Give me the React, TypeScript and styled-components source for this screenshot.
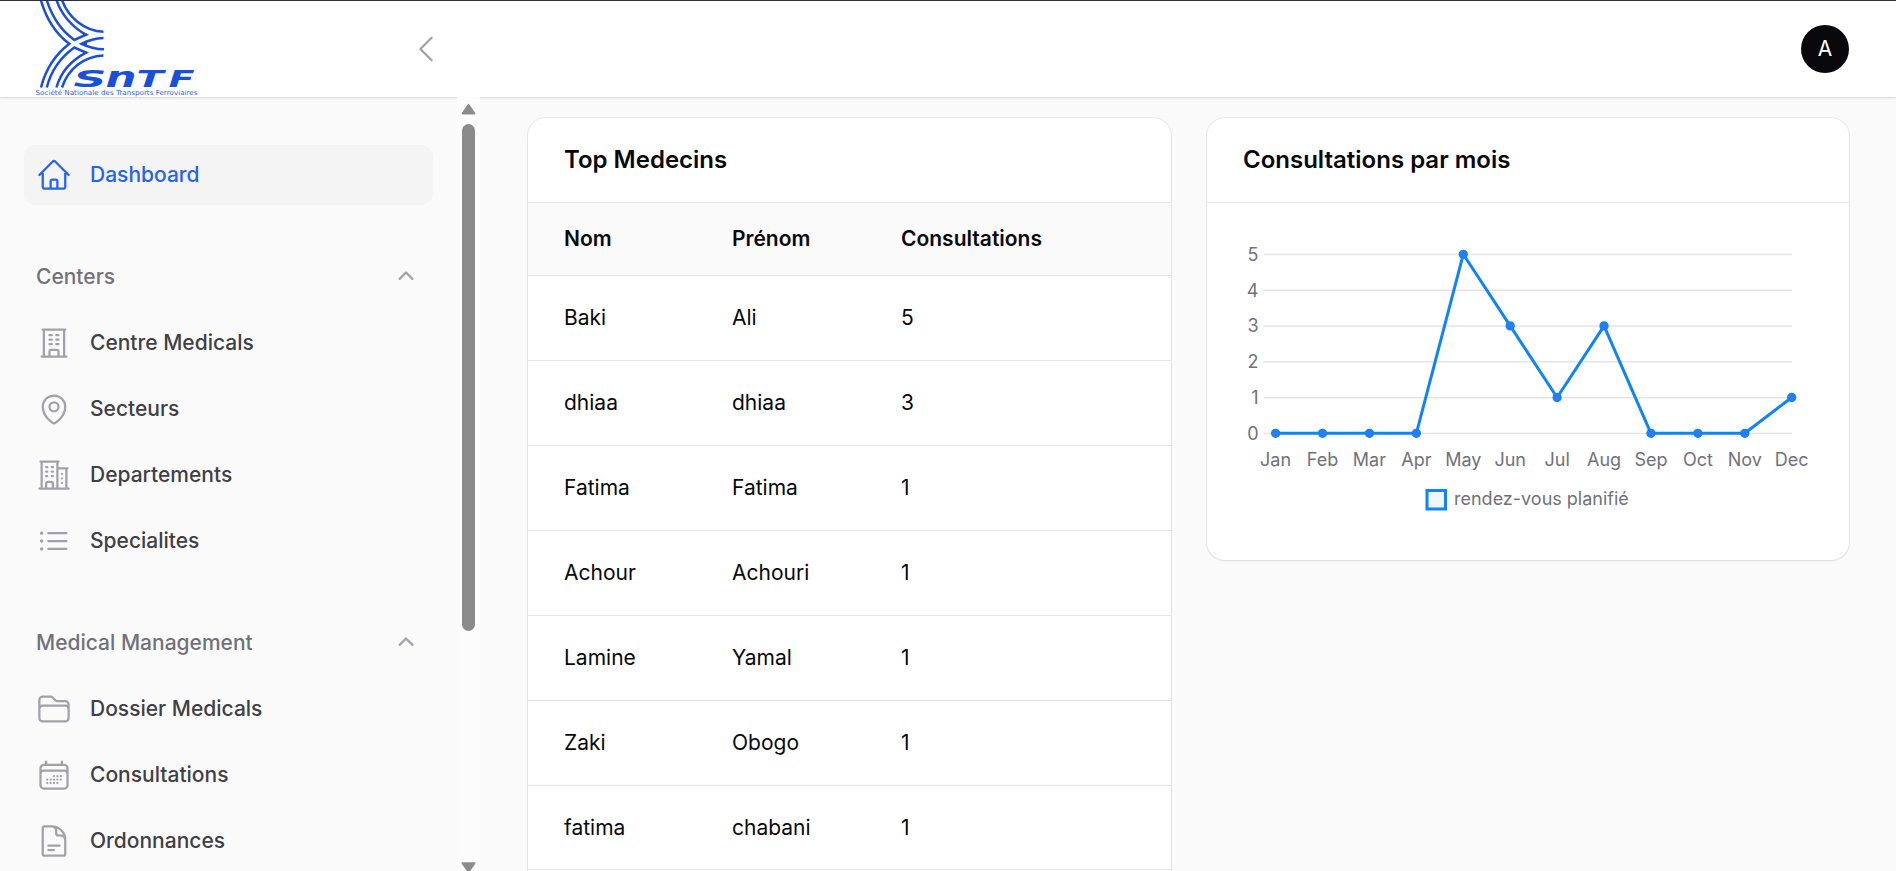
import React from 'react';
import styled, { createGlobalStyle } from 'styled-components';
import {
  HiOutlineHome, HiOutlineBuildingOffice, HiOutlineMapPin, HiOutlineBuildingOffice2,
  HiOutlineListBullet, HiOutlineFolder, HiOutlineCalendarDays, HiOutlineDocumentText,
  HiOutlineChevronLeft, HiMiniChevronUp,
} from 'react-icons/hi2';

const Global = createGlobalStyle`
  * { box-sizing: border-box; }
  body { margin: 0; background: #fafafa; font-family: Inter, "Noto Sans", sans-serif; color: #09090b; overflow: hidden; }
`;

const Page = styled.div`
  height: 871px;
  display: flex;
  flex-direction: column;
  overflow: hidden;
  border-top: 1px solid #2f2e41;
`;

const Topbar = styled.header`
  flex: none;
  height: 96px;
  display: flex;
  align-items: center;
  justify-content: space-between;
  background: #fff;
  box-shadow: 0 0 0 1px rgba(9, 9, 11, 0.06), 0 1px 3px rgba(0, 0, 0, 0.1);
  padding-right: 47px;
`;

const Brand = styled.div`
  width: 444px;
  height: 96px;
  padding-left: 34px;
  display: flex;
  justify-content: space-between;
  align-items: center;
`;

const CollapseIcon = styled(HiOutlineChevronLeft)`
  width: 36px;
  height: 36px;
  color: #a1a1aa;
`;

const Avatar = styled.div`
  width: 48px;
  height: 48px;
  border-radius: 50%;
  background: #09090b;
  color: #fff;
  display: flex;
  align-items: center;
  justify-content: center;
  font-size: 21px;
  padding-bottom: 1px;
`;

const Body = styled.div`
  flex: 1;
  min-height: 0;
  display: flex;
`;

const Sidebar = styled.aside`
  width: 457px;
  flex: none;
  overflow: hidden;
  padding: 48px 24px;
  display: flex;
  flex-direction: column;
  gap: 42px;
`;

const Group = styled.div`
  display: flex;
  flex-direction: column;
  gap: 6px;
`;

const Label = styled.span`
  padding-bottom: 2px;
`;

const GroupHeader = styled.div`
  height: 60px;
  flex: none;
  padding: 0 12px;
  display: flex;
  align-items: center;
  justify-content: space-between;
  font-size: 21px;
  font-weight: 500;
  color: #71717a;
  svg { width: 30px; height: 30px; color: #a1a1aa; }
`;

const Item = styled.a<{ $active?: boolean }>`
  height: 60px;
  flex: none;
  padding: 0 12px;
  display: flex;
  align-items: center;
  gap: 18px;
  border-radius: 12px;
  font-size: 21px;
  font-weight: 500;
  background: ${(p) => (p.$active ? '#f4f4f5' : 'transparent')};
  color: ${(p) => (p.$active ? '#2563eb' : '#3f3f46')};
  svg { width: 36px; height: 36px; color: ${(p) => (p.$active ? '#2563eb' : '#a1a1aa')}; }
`;

const Scrollbar = styled.div`
  width: 23px;
  flex: none;
  position: relative;
  z-index: 1;
  background: #fcfcfc;
  display: flex;
  flex-direction: column;
  align-items: center;
  padding-top: 6px;
`;

const Thumb = styled.div`
  width: 13px;
  height: 507px;
  margin: 9px 0 230px;
  flex: none;
  border-radius: 7px;
  background: #8b8b8b;
`;

const Arrow = styled.svg`
  display: block;
  flex: none;
  width: 15px;
  height: 12px;
`;

const Main = styled.main`
  flex: 1;
  display: grid;
  grid-template-columns: 643px 642px;
  align-items: start;
  gap: 36px;
  padding: 21px 47px 0 48px;
  overflow: hidden;
`;

const Card = styled.section<{ $tall?: boolean }>`
  background: #fff;
  height: ${(p) => (p.$tall ? '820px' : 'auto')};
  border-radius: 18px;
  overflow: hidden;
  box-shadow: 0 0 0 1px rgba(9, 9, 11, 0.06), 0 1px 3px rgba(0, 0, 0, 0.08);
`;

const CardTitle = styled.h3`
  margin: 0;
  height: 85px;
  padding: 0 36px 2px;
  display: flex;
  align-items: center;
  font-size: 24px;
  font-weight: 600;
  border-bottom: 1px solid #e4e4e7;
`;

const Table = styled.table`
  width: 100%;
  border-collapse: separate;
  border-spacing: 0;
  table-layout: fixed;
  font-size: 21px;
`;

const Th = styled.th`
  height: 73px;
  padding: 0 0 2px 36px;
  text-align: left;
  font-weight: 600;
  background: #fafafa;
  border-bottom: 1px solid #e4e4e7;
`;

const Td = styled.td`
  height: 85px;
  padding: 0 0 2px 36px;
  border-bottom: 1px solid #e4e4e7;
  tr:last-child > & { height: 84px; padding-bottom: 0; }
`;

const ChartArea = styled.svg`
  display: block;
  width: 642px;
  height: 357px;
  font-size: 18px;
  fill: #71717a;
`;

const Wordmark = styled.g`
  font: italic bold 22.2px "DejaVu Sans", sans-serif;
  fill: #1a4fdc;
`;

const Rounded = styled.text`
  font-size: 28.5px;
`;

const Logo = () => (
  <svg width="168" height="96" viewBox="34 1 168 96" aria-label="SNTF">
    <g fill="none" stroke="#1a4fdc" strokeWidth="2.5">
      <path d="M40.800 0C46 18 56 34 69.300 43.800C56 54 46 68 41 87.500" />
      <path d="M46.700 0C52 17 62 31 74.300 40L86 34.700C72 27 61 14 56.500 0" />
      <path d="M62 0C68 17 84 31 103.500 31.800" />
      <path d="M103.500 38C94 38.500 87 41 81.500 43.800C87 46.500 94 49 104 49.300" />
      <path d="M46.800 87.500C51 71 61 57 74.300 47.500L86 52.600C72 60 61 71 56.500 87.500" />
      <path d="M62 87.500C68 69 84 56 103.500 55.400" />
    </g>
    <path d="M83 32.500L89 34.700L83 36.800ZM83 54.800L89 52.600L83 50.500ZM79.500 43.800L87 41.500V46Z" fill="#1a4fdc" />
    <Wordmark>
      <text x="73.500" y="87" textLength="33" lengthAdjust="spacingAndGlyphs">S</text>
      <Rounded x="105.500" y="87" textLength="31" lengthAdjust="spacingAndGlyphs">n</Rounded>
      <text x="136.500" y="87" textLength="27" lengthAdjust="spacingAndGlyphs">T</text>
      <text x="168.500" y="87" textLength="26" lengthAdjust="spacingAndGlyphs">F</text>
    </Wordmark>
    <text x="35.500" y="95.200" textLength="162" lengthAdjust="spacingAndGlyphs" fontFamily="DejaVu Sans" fontSize="6.800" fill="#2a62ee">
      Société Nationale des Transports Ferroviaires
    </text>
  </svg>
);

const groups = [
  {
    name: 'Centers',
    items: [
      { label: 'Centre Medicals', Icon: HiOutlineBuildingOffice },
      { label: 'Secteurs', Icon: HiOutlineMapPin },
      { label: 'Departements', Icon: HiOutlineBuildingOffice2 },
      { label: 'Specialites', Icon: HiOutlineListBullet },
    ],
  },
  {
    name: 'Medical Management',
    items: [
      { label: 'Dossier Medicals', Icon: HiOutlineFolder },
      { label: 'Consultations', Icon: HiOutlineCalendarDays },
      { label: 'Ordonnances', Icon: HiOutlineDocumentText },
    ],
  },
];

const doctors = [
  ['Baki', 'Ali', 5],
  ['dhiaa', 'dhiaa', 3],
  ['Fatima', 'Fatima', 1],
  ['Achour', 'Achouri', 1],
  ['Lamine', 'Yamal', 1],
  ['Zaki', 'Obogo', 1],
  ['fatima', 'chabani', 1],
];

const months = ['Jan', 'Feb', 'Mar', 'Apr', 'May', 'Jun', 'Jul', 'Aug', 'Sep', 'Oct', 'Nov', 'Dec'];
const values = [0, 0, 0, 0, 5, 3, 1, 3, 0, 0, 0, 1];
const px = (i: number) => 68.6 + i * 46.92;
const py = (v: number) => 230.3 - v * 35.8;

const Chart = () => (
  <ChartArea viewBox="0 0 642 357">
    {[0, 1, 2, 3, 4, 5].map((v) => (
      <g key={v}>
        <rect x="56.500" y={py(v) - 0.6} width="528.500" height="1.500" fill="#e4e4e7" />
        <text x="51.500" y={py(v) + 6.4} textAnchor="end">{v}</text>
      </g>
    ))}
    <polyline points={values.map((v, i) => `${px(i)},${py(v)}`).join(' ')} fill="none" stroke="#0f84fa" strokeWidth="3" strokeLinejoin="round" />
    {values.map((v, i) => (
      <g key={i}>
        <circle cx={px(i)} cy={py(v)} r="3.900" fill="#2b7bf3" stroke="#0f84fa" strokeWidth="1.500" />
        <text x={px(i)} y="263" textAnchor="middle">{months[i]}</text>
      </g>
    ))}
    <rect x="220" y="287.500" width="18.500" height="18.500" fill="#eff6ff" stroke="#0f84fa" strokeWidth="3" />
    <text x="247" y="302">rendez-vous planifié</text>
  </ChartArea>
);

export default function App() {
  return (
    <>
      <Global />
      <Page>
        <Topbar>
          <Brand>
            <Logo />
            <CollapseIcon />
          </Brand>
          <Avatar>A</Avatar>
        </Topbar>
        <Body>
          <Sidebar>
            <Item $active><HiOutlineHome /><Label>Dashboard</Label></Item>
            {groups.map((g) => (
              <Group key={g.name}>
                <GroupHeader><Label>{g.name}</Label><HiMiniChevronUp /></GroupHeader>
                {g.items.map(({ label, Icon }) => (
                  <Item key={label}><Icon /><Label>{label}</Label></Item>
                ))}
              </Group>
            ))}
          </Sidebar>
          <Scrollbar>
            <Arrow viewBox="0 0 15 12"><path d="M7.500 1.800L13.500 10.500H1.500Z" fill="#8b8b8b" stroke="#8b8b8b" strokeWidth="1.800" strokeLinejoin="round" /></Arrow>
            <Thumb />
            <Arrow viewBox="0 0 15 12"><path d="M7.500 11L13.500 2.200H1.500Z" fill="#8b8b8b" stroke="#8b8b8b" strokeWidth="1.800" strokeLinejoin="round" /></Arrow>
          </Scrollbar>
          <Main>
            <Card $tall>
              <CardTitle>Top Medecins</CardTitle>
              <Table>
                <colgroup><col style={{ width: 168 }} /><col style={{ width: 169 }} /><col /></colgroup>
                <thead><tr><Th>Nom</Th><Th>Prénom</Th><Th>Consultations</Th></tr></thead>
                <tbody>
                  {doctors.map((row, i) => (
                    <tr key={i}>{row.map((cell, j) => <Td key={j}>{cell}</Td>)}</tr>
                  ))}
                </tbody>
              </Table>
            </Card>
            <Card>
              <CardTitle>Consultations par mois</CardTitle>
              <Chart />
            </Card>
          </Main>
        </Body>
      </Page>
    </>
  );
}
